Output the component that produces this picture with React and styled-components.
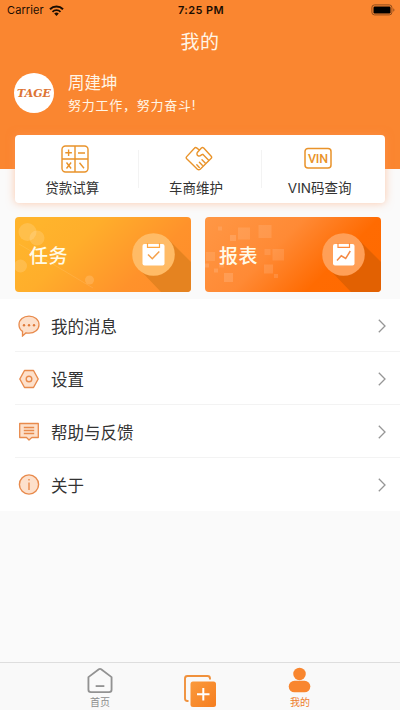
import styled, { createGlobalStyle } from 'styled-components'

const menu = [
  { icon: <MessageIcon />, label: '我的消息' },
  { icon: <SettingIcon />, label: '设置' },
  { icon: <HelpIcon />, label: '帮助与反馈' },
  { icon: <AboutIcon />, label: '关于' },
]

// x, y, size, opacity
const squares = [
  [13, 9.5, 4, 0.1],
  [25, 18, 6, 0.14],
  [33, 10.5, 12, 0.11],
  [53.5, 8, 13, 0.11],
  [59.5, 32, 6, 0.1],
  [67.5, 32, 11.5, 0.11],
  [1, 35, 9, 0.1],
  [0, 46.5, 4, 0.14],
  [9, 51.5, 4, 0.14],
  [14, 45.5, 5, 0.1],
  [19, 56, 9, 0.14],
  [59, 47.5, 9, 0.12],
  [69, 57, 4, 0.12],
]

function App() {
  return (
    <Screen>
      <GlobalStyle />
      <Top>
        <StatusBar>
          <Carrier>
            Carrier
            <WifiIcon />
          </Carrier>
          <Time>7:25 PM</Time>
          <Battery>
            <BatteryIcon />
          </Battery>
        </StatusBar>
        <Title>我的</Title>
        <Profile>
          <Avatar>TAGE</Avatar>
          <div>
            <Name>周建坤</Name>
            <Motto>努力工作，努力奋斗!</Motto>
          </div>
        </Profile>
      </Top>
      <Tools>
        <Tool $icon={3}>
          <CalcIcon />
          <ToolText>贷款试算</ToolText>
        </Tool>
        <Divider />
        <Tool $icon={3}>
          <HandIcon />
          <ToolText>车商维护</ToolText>
        </Tool>
        <Divider />
        <Tool $icon={-2}>
          <VinIcon />
          <ToolText>VIN码查询</ToolText>
        </Tool>
      </Tools>
      <Cards>
        <Card $bg='linear-gradient(135deg, #ffb42c 12%, #ffae2b 35%, #ff922b 72%, #ff8c2a)'>
          <TaskArt />
          <CardText>任务</CardText>
        </Card>
        <Card $bg='linear-gradient(135deg, #ff9745, #ff8a35 40%, #ff6b02 70%, #ff6a00)'>
          <ReportArt />
          <CardText>报表</CardText>
        </Card>
      </Cards>
      <List>
        {menu.map((item) => (
          <Row key={item.label}>
            {item.icon}
            <RowText>{item.label}</RowText>
            <Arrow />
          </Row>
        ))}
      </List>
      <TabBar>
        <Tab>
          <HomeIcon />
          <TabText>首页</TabText>
        </Tab>
        <Tab>
          <AddIcon />
        </Tab>
        <Tab $active>
          <UserIcon />
          <TabText>我的</TabText>
        </Tab>
      </TabBar>
    </Screen>
  )
}

export default App

function WifiIcon() {
  return (
    <svg width='15' height='11' viewBox='0 0 15 11' fill='none' stroke='#1a0d02'>
      <path d='M1 4.2a9.2 9.2 0 0 1 13 0' strokeWidth='2' />
      <path d='M3.5 6.8a5.7 5.7 0 0 1 8 0' strokeWidth='1.8' />
      <path d='M7.5 11L5.2 8.6a3.3 3.3 0 0 1 4.6 0z' fill='#1a0d02' stroke='none' />
    </svg>
  )
}

function BatteryIcon() {
  return (
    <svg width='24' height='12' viewBox='0 0 24 12'>
      <rect x='0.9' y='0.9' width='20' height='10' rx='2.6' fill='none' stroke='#8f4c1b' />
      <rect x='2.5' y='2.5' width='17' height='7' rx='1.2' fill='#000' />
      <path d='M22.2 4.2q1.3.6 1.3 1.8t-1.3 1.8z' fill='#a3561e' />
    </svg>
  )
}

function CalcIcon() {
  return (
    <svg width='28' height='28' viewBox='0 0 28 28' fill='none' stroke='#e9932a' strokeWidth='1.4'>
      <rect x='1' y='1' width='26' height='26' rx='3.5' />
      <path d='M14 1v26M1 14h26' />
      <path d='M4.3 7.8h6.6M7.6 4.5v6.6M17 8h7M5.5 17.5l4.6 6M10.1 17.5l-4.6 6M18.5 17.8l4.5 5.4' />
    </svg>
  )
}

function HandIcon() {
  return (
    <svg
      width='28'
      height='28'
      viewBox='0 0 28 28'
      fill='none'
      stroke='#e9932a'
      strokeWidth='1.4'
      strokeLinejoin='round'
      strokeLinecap='round'
    >
      <path d='M14.3 5L11.6 2.9Q10.4 2 9.4 3.2L1.7 11.6q-1 1.1 0 2.2l10.7 10.4q1.4 1.2 2.8 0L26 13.6q1.2-1.2.2-2.4L18.7 3q-1.200-1-2.300 0l-4.100 4.500q-1 2.400.900 3.400 1.500.600 3-.900l1.600-.700 5.600 5.700' />
      <path d='M11.800 19.800l2.500 2.700M14.400 17.300l2.900 3M17 14.800l3.200 3.200' />
    </svg>
  )
}

function VinIcon() {
  return (
    <svg width='28' height='28' viewBox='0 0 28 28' fill='none' stroke='#e9932a' strokeWidth='1.5'>
      <rect x='1' y='3.500' width='26' height='19.500' rx='3' />
      <text
        x='14'
        y='17.800'
        fontSize='12.500'
        fontFamily='Roboto, sans-serif'
        fontWeight='500'
        textAnchor='middle'
        textLength='20'
        fill='#e9932a'
        stroke='none'
      >
        VIN
      </text>
    </svg>
  )
}

function TaskArt() {
  return (
    <Art width='176' height='75' viewBox='0 0 176 75'>
      <g fill='#fff' fillOpacity='0.15'>
        <circle cx='12.5' cy='15' r='9' />
        <circle cx='22' cy='21' r='7.5' />
        <circle cx='5.5' cy='49' r='6.5' />
        <circle cx='74.5' cy='63' r='4.5' />
      </g>
      <path d='M4 27L78 71' stroke='#fff' strokeOpacity='0.1' />
      <path d='M154 23L176 45V75H146L125 53z' fill='#e58320' />
      <circle cx='138.5' cy='37.5' r='21.3' fill='#ffbb66' />
      <rect x='127.5' y='27' width='22' height='21.5' rx='2' fill='#fff' />
      <path d='M132.5 26v4.3h12V26' fill='none' stroke='#ffa63f' strokeWidth='1.2' />
      <path d='M133 37.5l4.3 4.2 7-7.2' fill='none' stroke='#f5a04a' strokeWidth='1.5' />
    </Art>
  )
}

function ReportArt() {
  return (
    <Art width='176' height='75' viewBox='0 0 176 75'>
      {squares.map(([x, y, size, opacity], i) => (
        <rect key={i} x={x} y={y} width={size} height={size} fill='#fff' fillOpacity={opacity} />
      ))}
      <path d='M154 23L176 45V75H146L125 53z' fill='#e26102' />
      <circle cx='138.5' cy='37.5' r='21.3' fill='#ff9f57' />
      <rect x='128' y='27' width='21.5' height='21.5' rx='2' fill='#fff' />
      <path d='M133 26v4.3h11.5V26' fill='none' stroke='#ff8a3a' strokeWidth='1.2' />
      <path d='M132 43.5l4.3-4.7 4.4 2.7 4.6-7.5' fill='none' stroke='#f58a45' strokeWidth='1.5' />
    </Art>
  )
}

function MessageIcon() {
  return (
    <svg width='22' height='22' viewBox='0 0 22 22'>
      <path
        d='M11 1.2c5.6 0 10 3.6 10 8.5s-4.4 8.5-10 8.5q-1.5 0-2.9-.4L4.5 21v-4.6C2.3 14.8 1 12.4 1 9.7c0-4.9 4.4-8.5 10-8.5z'
        fill='#fde0cb'
        stroke='#e88a4c'
        strokeWidth='1.3'
      />
      <g fill='#e07a3a'>
        <circle cx='6' cy='10.3' r='1.2' />
        <circle cx='11' cy='10.3' r='1.2' />
        <circle cx='16' cy='10.3' r='1.2' />
      </g>
    </svg>
  )
}

function SettingIcon() {
  return (
    <svg width='22' height='22' viewBox='0 0 22 22' stroke='#e88a4c' strokeWidth='1.4' strokeLinejoin='round'>
      <path d='M6.5 2.5h9L20.2 11l-4.7 8.5h-9L1.8 11z' fill='#fde0cb' />
      <circle cx='11' cy='11' r='2.8' fill='#fde6d6' />
    </svg>
  )
}

function HelpIcon() {
  return (
    <svg width='22' height='22' viewBox='0 0 22 22' stroke='#e88a4c' strokeWidth='1.3' strokeLinejoin='round'>
      <path d='M1.7 2.5h18.600v14h-6.500L11 19l-2.500-2.500H1.700z' fill='#fde0cb' />
      <path d='M5.800 6.500h10.400M5.800 9.500h10.400M5.800 12.500h10.400' />
    </svg>
  )
}

function AboutIcon() {
  return (
    <svg width='22' height='22' viewBox='0 0 22 22' fill='none' stroke='#e88a4c' strokeWidth='1.4'>
      <circle cx='11' cy='10.500' r='9.600' fill='#fde0cb' />
      <path d='M11 8.500v7.500M11 5v1.600' />
    </svg>
  )
}

function Arrow() {
  return (
    <svg width='8' height='14' viewBox='0 0 8 14' fill='none' stroke='#969696' strokeWidth='1.3'>
      <path d='M.8 .8L7 7 .8 13.2' />
    </svg>
  )
}

function HomeIcon() {
  return (
    <svg width='28' height='28' viewBox='0 0 28 28' fill='none' stroke='#929292' strokeWidth='1.9'>
      <path d='M2 10.5L12.800 2.400q1.200-.800 2.400 0L26 10.500V23.500q0 2.500-2.500 2.500h-19Q2 26 2 23.500z' strokeLinejoin='round' />
      <path d='M9.500 19.800h9' />
    </svg>
  )
}

function AddIcon() {
  return (
    <svg width='34' height='34' viewBox='0 0 34 34' fill='none'>
      <defs>
        <linearGradient id='add' x1='0' y1='0' x2='1' y2='1'>
          <stop offset='0' stopColor='#fb9a3c' />
          <stop offset='1' stopColor='#f57e20' />
        </linearGradient>
      </defs>
      <path d='M5.5 27H4.500Q2 27 2 24.500V4.500Q2 2 4.500 2h20Q27 2 27 4.500V5.500' stroke='#f0913c' strokeWidth='1.9' />
      <rect x='7.5' y='7.500' width='25.500' height='25.500' rx='2.5' fill='url(#add)' />
      <path d='M14 20.300h12.500M20.300 14v12.500' stroke='#fff' strokeWidth='2' />
    </svg>
  )
}

function UserIcon() {
  return (
    <svg width='24' height='28' viewBox='0 0 24 28' fill='#f9862f'>
      <circle cx='11.5' cy='7.2' r='6.500' />
      <rect x='0.300' y='14.300' width='22.400' height='12' rx='6' />
    </svg>
  )
}

const GlobalStyle = createGlobalStyle`
  body {
    margin: 0;
  }
`
const Screen = styled.div`
  width: 400px;
  height: 710px;
  display: flex;
  flex-direction: column;
  overflow: hidden;
  background: #fafafa;
  color: #333;
  font-family: Inter, 'Noto Sans CJK SC', sans-serif;
`
const Top = styled.header`
  height: 169px;
  flex-shrink: 0;
  background: #fa8630;
  color: #fff5e6;
`
const StatusBar = styled.div`
  height: 20px;
  display: grid;
  grid-template-columns: 1fr auto 1fr;
  align-items: center;
  padding: 0 5px 0 7px;
  color: #1a0d02;
  font-size: 11px;
`
const Carrier = styled.div`
  display: flex;
  align-items: center;
  gap: 5px;
  letter-spacing: 0.1px;
`
const Time = styled.div`
  font-weight: 600;
  letter-spacing: 0.4px;
`
const Battery = styled.div`
  display: flex;
  justify-content: flex-end;
`
const Title = styled.h1`
  margin: 0;
  padding-top: 3px;
  font-size: 19px;
  font-weight: 400;
  line-height: 40px;
  letter-spacing: 0.5px;
  text-align: center;
`
const Profile = styled.div`
  display: flex;
  align-items: center;
  gap: 14px;
  padding: 8px 14px;
`
const Avatar = styled.div`
  width: 40px;
  height: 40px;
  display: flex;
  align-items: center;
  justify-content: center;
  border-radius: 50%;
  background: white;
  color: #dd7434;
  font-family: 'DejaVu Serif', serif;
  font-size: 11px;
  font-weight: 700;
  font-style: italic;
`
const Name = styled.div`
  font-size: 16.5px;
  line-height: 24px;
`
const Motto = styled.div`
  font-size: 13px;
  line-height: 20px;
  letter-spacing: 0.75px;
`
const Tools = styled.section`
  position: relative;
  display: flex;
  align-items: center;
  flex-shrink: 0;
  height: 68px;
  margin: -34px 15px 0;
  border-radius: 4px;
  background: white;
  box-shadow: 0 0 8px rgba(255, 150, 90, 0.5);
`
const Tool = styled.div`
  flex: 1;
  display: flex;
  flex-direction: column;
  align-items: center;
  padding: 4px 8px 0 0;
  svg {
    position: relative;
    left: ${(props) => props.$icon}px;
  }
`
const ToolText = styled.div`
  margin-top: 5px;
  font-size: 13.5px;
  line-height: 20px;
  white-space: nowrap;
`
const Divider = styled.div`
  width: 1px;
  height: 38px;
  background: #f3f3f3;
`
const Cards = styled.section`
  display: flex;
  gap: 14px;
  flex-shrink: 0;
  padding: 14px 19px 7px 15px;
`
const Card = styled.div`
  position: relative;
  flex: 1;
  height: 75px;
  display: flex;
  align-items: center;
  padding: 0 0 1px 14px;
  box-sizing: border-box;
  overflow: hidden;
  border-radius: 4px;
  background: ${(props) => props.$bg};
`
const Art = styled.svg`
  position: absolute;
  top: 0;
  left: 0;
`
const CardText = styled.div`
  position: relative;
  color: #fffbe8;
  font-size: 19px;
  font-weight: 500;
  letter-spacing: 0.5px;
`
const List = styled.div`
  flex-shrink: 0;
  background: white;
`
const Row = styled.div`
  height: 53px;
  display: flex;
  align-items: center;
  box-sizing: border-box;
  margin-left: 15px;
  padding: 1px 14px 0 3px;
  border-bottom: 1px solid #f3f3f3;
  &:last-child {
    padding-top: 0;
    border-bottom: 0;
  }
`
const RowText = styled.div`
  flex: 1;
  margin-left: 11px;
  font-size: 16.5px;
`
const TabBar = styled.nav`
  height: 48px;
  display: flex;
  flex-shrink: 0;
  margin-top: auto;
  border-top: 1px solid #dedede;
  box-sizing: border-box;
  padding: 0 50px;
  background: #f9f9f9;
`
const Tab = styled.div`
  flex: 1;
  display: flex;
  flex-direction: column;
  align-items: center;
  padding-top: 4px;
  color: ${(props) => (props.$active ? '#ee7d2c' : '#8d8d8d')};
  &:nth-child(2) {
    padding-top: 11px;
  }
`
const TabText = styled.div`
  font-size: 10px;
  line-height: 16px;
`
